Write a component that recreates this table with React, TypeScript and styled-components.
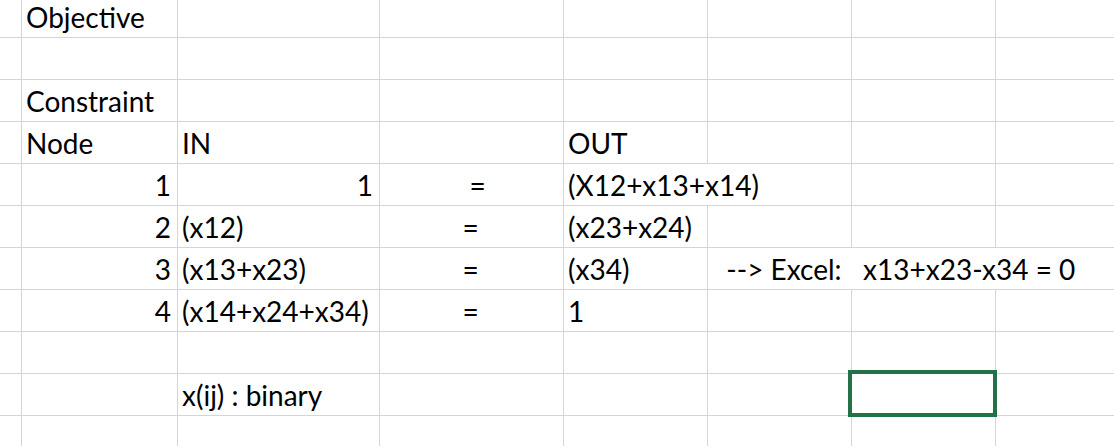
import React from "react";
import styled, { createGlobalStyle } from "styled-components";

const GlobalStyle = createGlobalStyle`
  html, body {
    margin: 0;
    padding: 0;
    background: #ffffff;
    overflow: hidden;
  }
  body {
    font-family: Lato, "Liberation Sans", sans-serif;
  }
`;

const COLS = [22, 156, 202, 184, 144, 144, 144, 144];
const ROWS = [38, 42, 42, 42, 42, 42, 42, 42, 42, 42, 42];

const Sheet = styled.div`
  display: grid;
  grid-template-columns: ${COLS.map((c) => `${c}px`).join(" ")};
  grid-template-rows: ${ROWS.map((r) => `${r}px`).join(" ")};
  width: max-content;
  background: #ffffff;
  color: #000000;
`;

type Align = "left" | "right" | "center";

const Cell = styled.div<{ $align: Align; $span: number; $selected: boolean }>`
  box-sizing: border-box;
  grid-column: span ${(p) => p.$span};
  position: relative;
  display: flex;
  align-items: flex-end;
  justify-content: ${(p) =>
    p.$align === "right" ? "flex-end" : p.$align === "center" ? "center" : "flex-start"};
  border-right: 1px solid #d5d5d5;
  border-bottom: 1px solid #d5d5d5;
  padding: 0 6px 6px 4px;
  font-size: 28px;
  line-height: 1;
  white-space: pre;
  overflow: visible;
  z-index: ${(p) => (p.$selected ? 2 : 0)};

  ${(p) =>
    p.$selected &&
    `
    &::after {
      content: "";
      position: absolute;
      left: -4px;
      top: -4px;
      right: -2px;
      bottom: -2px;
      border: 4px solid #237148;
      pointer-events: none;
    }
  `}
`;

type Spec = { text?: string; align?: Align; span?: number; selected?: boolean };

const E: Spec = {};
const empty = (n: number): Spec[] => Array.from({ length: n }, () => E);

const DATA: Spec[][] = [
  [E, { text: "Objective" }, ...empty(6)],
  empty(8),
  [E, { text: "Constraint" }, ...empty(6)],
  [E, { text: "Node" }, { text: "IN" }, E, { text: "OUT" }, ...empty(3)],
  [
    E,
    { text: "1", align: "right" },
    { text: "1", align: "right" },
    { text: "  =", align: "center" },
    { text: "(X12+x13+x14)", span: 2 },
    E,
    E,
  ],
  [
    E,
    { text: "2", align: "right" },
    { text: "(x12)" },
    { text: "=", align: "center" },
    { text: "(x23+x24)" },
    ...empty(3),
  ],
  [
    E,
    { text: "3", align: "right" },
    { text: "(x13+x23)" },
    { text: "=", align: "center" },
    { text: "(x34)" },
    { text: "  --> Excel:   x13+x23-x34 = 0", span: 3 },
  ],
  [
    E,
    { text: "4", align: "right" },
    { text: "(x14+x24+x34)" },
    { text: "=", align: "center" },
    { text: "1" },
    ...empty(3),
  ],
  empty(8),
  [E, E, { text: "x(ij) : binary" }, E, E, E, { selected: true }, E],
  empty(8),
];

export default function App() {
  return (
    <>
      <GlobalStyle />
      <Sheet>
        {DATA.map((row, r) =>
          row.map((c, i) => (
            <Cell
              key={`${r}-${i}`}
              $align={c.align ?? "left"}
              $span={c.span ?? 1}
              $selected={!!c.selected}
            >
              {c.text ?? ""}
            </Cell>
          ))
        )}
      </Sheet>
    </>
  );
}
